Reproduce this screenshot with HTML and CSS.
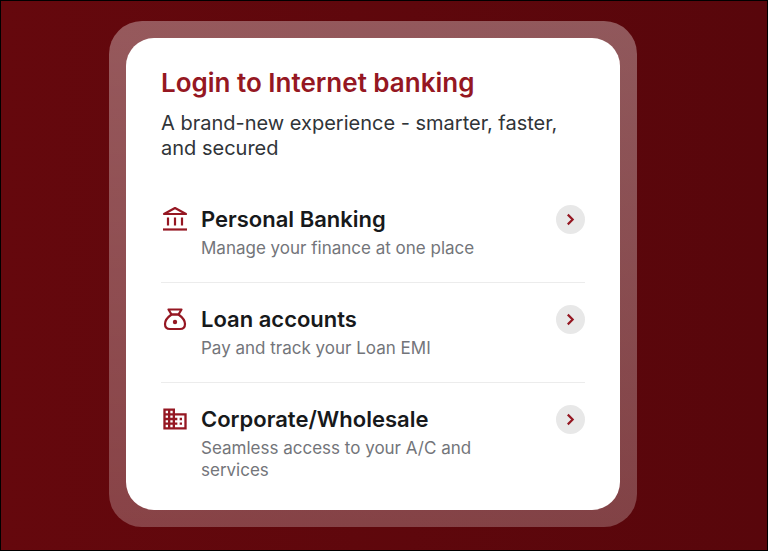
FILE: index.html
```html
<!DOCTYPE html>
<html lang="en">
  <head>
    <meta charset="UTF-8" />
    <meta name="viewport" content="width=device-width, initial-scale=1.0" />
    <title>Login to Internet banking</title>
    <link rel="stylesheet" href="styles.css">
  </head>
  <body>
    <main class="page">
      <div class="frame">
        <section class="card">
          <h1>Login to Internet banking</h1>
          <p class="intro">A brand-new experience - smarter, faster, and secured</p>
          <nav class="options">
            <a class="option" href="#personal">
              <svg class="icon" viewBox="0 0 28 28" fill="none" stroke="currentColor" stroke-width="2.200">
                <path d="M3 9 14 3l11 6z" stroke-linejoin="round" />
                <path d="M7 12.500v8M14 12.500v8M21 12.500v8" />
                <path d="M2 24.500h24" />
              </svg>
              <span class="text">
                <span class="name">Personal Banking</span>
                <span class="detail">Manage your finance at one place</span>
              </span>
              <span class="arrow">
                <svg viewBox="0 0 12 12" fill="none" stroke="currentColor" stroke-width="2"><path d="m3.500 1.500 4.500 4.500-4.500 4.500" /></svg>
              </span>
            </a>
            <a class="option" href="#loans">
              <svg class="icon" viewBox="0 0 28 28" fill="none" stroke="currentColor" stroke-width="2.200" stroke-linejoin="round">
                <path d="M7.500 4.500h13l-3 5h-7z" />
                <path d="M10.500 9.500C7 12 4 15.500 4 19c0 3.500 2 5 5 5h10c3 0 5-1.500 5-5 0-3.500-3-7-6.500-9.500z" />
                <circle cx="14" cy="17" r="2.200" fill="currentColor" stroke="none" />
              </svg>
              <span class="text">
                <span class="name">Loan accounts</span>
                <span class="detail">Pay and track your Loan EMI</span>
              </span>
              <span class="arrow">
                <svg viewBox="0 0 12 12" fill="none" stroke="currentColor" stroke-width="2"><path d="m3.500 1.500 4.500 4.500-4.500 4.500" /></svg>
              </span>
            </a>
            <a class="option" href="#corporate">
              <svg class="icon" viewBox="0 0 24 24" fill="currentColor">
                <path d="M12 7V3H2v18h20V7H12zM6 19H4v-2h2v2zm0-4H4v-2h2v2zm0-4H4V9h2v2zm0-4H4V5h2v2zm4 12H8v-2h2v2zm0-4H8v-2h2v2zm0-4H8V9h2v2zm0-4H8V5h2v2zm10 12h-8v-2h2v-2h-2v-2h2v-2h-2V9h8v10zm-2-8h-2v2h2v-2zm0 4h-2v2h2v-2z" />
              </svg>
              <span class="text">
                <span class="name">Corporate/Wholesale</span>
                <span class="detail">Seamless access to your A/C and services</span>
              </span>
              <span class="arrow">
                <svg viewBox="0 0 12 12" fill="none" stroke="currentColor" stroke-width="2"><path d="m3.500 1.500 4.500 4.500-4.500 4.500" /></svg>
              </span>
            </a>
          </nav>
        </section>
      </div>
    </main>
  </body>
</html>
```
FILE: styles.css
```css
* {
  box-sizing: border-box;
}

body {
  margin: 0;
  font-family: Inter, "Liberation Sans", sans-serif;
  color: #17191b;
}

.page {
  min-height: 100vh;
  padding: 20px 130px 20px 108px;
  border: 1px solid #000;
  background: linear-gradient(90deg, #65080d, #58060b);
}

.frame {
  padding: 17px;
  border-radius: 33px;
  background: linear-gradient(rgba(255, 255, 255, 0.33), rgba(255, 255, 255, 0.24));
}

.card {
  padding: 28px 35px 29px;
  border-radius: 28px;
  background-color: #fff;
}

h1 {
  margin: 0;
  font-size: 26px;
  line-height: 34px;
  font-weight: 600;
  color: #951722;
}

.intro {
  margin: 11px 0 22px;
  font-size: 20px;
  line-height: 25px;
  color: #303438;
}

.option {
  display: flex;
  align-items: flex-start;
  gap: 12px;
  padding: 22px 0 23px;
  color: inherit;
  text-decoration: none;
}

.option + .option {
  border-top: 1px solid #ececec;
}

.option:last-child {
  padding-bottom: 0;
}

.icon {
  flex: none;
  width: 28px;
  height: 28px;
  color: #951722;
}

.text {
  flex: 1;
}

.name {
  display: block;
  margin-bottom: 4px;
  font-size: 22px;
  line-height: 28px;
  font-weight: 600;
}

.detail {
  display: block;
  max-width: 300px;
  font-size: 17px;
  line-height: 22px;
  color: #73757a;
}

.arrow {
  display: flex;
  flex: none;
  align-items: center;
  justify-content: center;
  width: 29px;
  height: 29px;
  border-radius: 50%;
  background-color: #e8e8e8;
  color: #951722;
}

.arrow svg {
  width: 13px;
  height: 13px;
}
```
